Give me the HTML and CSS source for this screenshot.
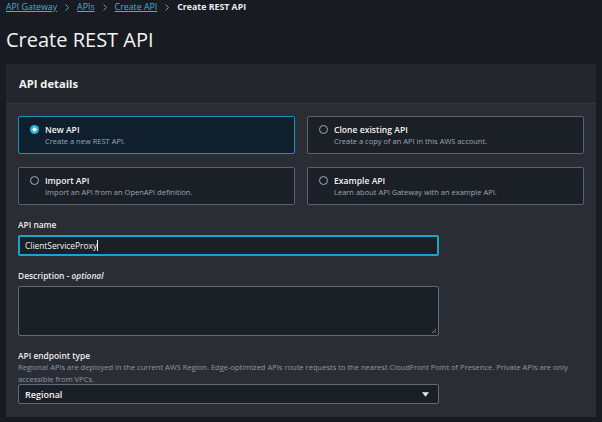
FILE: index.html
```html
<!DOCTYPE html>
<html>
<head>
<meta charset="utf-8">
<link rel="stylesheet" href="styles.css">
</head>
<body>
<nav class="crumbs">
  <a href="#">API Gateway</a>
  <svg class="chev" viewBox="0 0 8 10"><path d="M2 1l4 4-4 4" fill="none" stroke="#8d99a8" stroke-width="1.3"/></svg>
  <a href="#">APIs</a>
  <svg class="chev" viewBox="0 0 8 10"><path d="M2 1l4 4-4 4" fill="none" stroke="#8d99a8" stroke-width="1.3"/></svg>
  <a href="#">Create API</a>
  <svg class="chev" viewBox="0 0 8 10"><path d="M2 1l4 4-4 4" fill="none" stroke="#8d99a8" stroke-width="1.3"/></svg>
  <span class="current">Create REST API</span>
</nav>
<h1 class="title">Create REST API</h1>
<section class="panel">
  <header class="panel-head">API details</header>
  <div class="panel-body">
    <div class="tiles">
      <div class="tile selected">
        <span class="radio on"></span>
        <div><div class="t-title">New API</div><div class="t-desc">Create a new REST API.</div></div>
      </div>
      <div class="tile">
        <span class="radio"></span>
        <div><div class="t-title">Clone existing API</div><div class="t-desc">Create a copy of an API in this AWS account.</div></div>
      </div>
      <div class="tile">
        <span class="radio"></span>
        <div><div class="t-title">Import API</div><div class="t-desc">Import an API from an OpenAPI definition.</div></div>
      </div>
      <div class="tile">
        <span class="radio"></span>
        <div><div class="t-title">Example API</div><div class="t-desc">Learn about API Gateway with an example API.</div></div>
      </div>
    </div>

    <div class="field f-name">
      <div class="label">API name</div>
      <div class="input focus">ClientServiceProxy<span class="caret"></span></div>
    </div>

    <div class="field f-desc">
      <div class="label">Description <i>- optional</i></div>
      <div class="textarea">
        <svg class="grip" viewBox="0 0 6 6"><path d="M5 1L1 5M5 3.5L3.5 5" stroke="#8d99a8" stroke-width="0.8"/></svg>
      </div>
    </div>

    <div class="field f-type">
      <div class="label">API endpoint type</div>
      <div class="hint">Regional APIs are deployed in the current AWS Region. Edge-optimized APIs route requests to the nearest CloudFront Point of Presence. Private APIs are only accessible from VPCs.</div>
      <div class="select">Regional
        <svg class="arrow" viewBox="0 0 10 8"><path d="M1 1.5h8L5 6.5z" fill="#e9ebed"/></svg>
      </div>
    </div>
  </div>
</section>
</body>
</html>
```

FILE: styles.css
```css
html, body {
  margin: 0;
  padding: 0;
  background: #181b21;
  font-family: "Open Sans", "Noto Sans", sans-serif;
  color: #e9ebed;
}
body {
  width: 602px;
  height: 422px;
  overflow: hidden;
  padding: 0 6px;
  box-sizing: border-box;
}
.crumbs {
  display: flex;
  align-items: center;
  height: 14px;
  font-size: 8.8px;
  gap: 6px;
}
.crumbs a {
  color: #44b0d6;
  text-decoration: underline;
  text-underline-offset: 1px;
}
.chev { width: 6px; height: 9px; margin: 0 1px; }
.crumbs .current { font-weight: 700; color: #e9ebed; }
.title {
  margin: 14px 0 0 0;
  font-size: 20px;
  font-weight: 400;
  line-height: 24px;
  height: 36px;
  color: #f2f3f3;
}
.panel {
  width: 590px;
  background: #2a2d33;
}
.panel-head {
  height: 40px;
  box-sizing: border-box;
  padding: 0 13px;
  display: flex;
  align-items: center;
  background: #23272d;
  font-size: 11.2px;
  font-weight: 700;
  color: #f2f3f3;
  border-bottom: 1px solid #33373d;
}
.panel-body {
  padding: 12px 12px 13px;
}
.tiles {
  display: grid;
  grid-template-columns: 277px 277px;
  column-gap: 12px;
  row-gap: 13px;
}
.tile {
  height: 38px;
  box-sizing: border-box;
  border: 1px solid #5a626d;
  border-radius: 2px;
  background: #1b1f26;
  display: flex;
  align-items: flex-start;
  padding: 7px 0 0 11px;
  gap: 6px;
}
.tile.selected {
  border-color: #1695bb;
  background: #0f1f2e;
}
.radio {
  width: 7px;
  height: 7px;
  border: 1px solid #a3acb7;
  border-radius: 50%;
  margin-top: 1px;
  flex: none;
  box-sizing: content-box;
}
.radio.on {
  border: none;
  width: 9px;
  height: 9px;
  background: radial-gradient(circle, #fff 0 1.8px, #2ab3d9 2.3px);
}
.t-title {
  font-size: 8.6px;
  line-height: 12px;
  color: #f2f3f3;
  font-weight: 600;
}
.t-desc {
  font-size: 7.5px;
  line-height: 11px;
  color: #9ba7b6;
}
.f-name { margin-top: 14px; }
.f-desc { margin-top: 14px; }
.f-type { margin-top: 14px; }
.label {
  font-size: 8.4px;
  line-height: 12px;
  font-weight: 600;
  color: #e9ebed;
  margin-bottom: 4px;
}
.label i { font-weight: 600; }
.input, .textarea, .select {
  width: 421px;
  box-sizing: border-box;
  background: #1b1f26;
  border: 1px solid #5f6b7a;
  border-radius: 2px;
}
.input {
  height: 21px;
  font-size: 8.4px;
  line-height: 17px;
  padding: 0 8px;
  color: #f2f3f3;
}
.input.focus {
  border: 2px solid #19a3cf;
  padding: 0 5px;
}
.caret {
  display: inline-block;
  width: 1px;
  height: 11px;
  background: #f2f3f3;
  vertical-align: -2px;
}
.textarea {
  height: 50px;
  position: relative;
}
.grip {
  position: absolute;
  right: 1px;
  bottom: 1px;
  width: 6px;
  height: 6px;
}
.label + .hint { margin-top: -5px; }
.hint {
  font-size: 7.55px;
  line-height: 12px;
  color: #8d99a8;
  width: 566px;
  margin-bottom: -1px;
}
.select {
  height: 20px;
  font-size: 9px;
  font-weight: 600;
  padding: 0 6px;
  color: #f2f3f3;
  display: flex;
  justify-content: space-between;
  align-items: center;
}
.arrow { width: 9px; height: 7px; margin-right: 2px; }
```
